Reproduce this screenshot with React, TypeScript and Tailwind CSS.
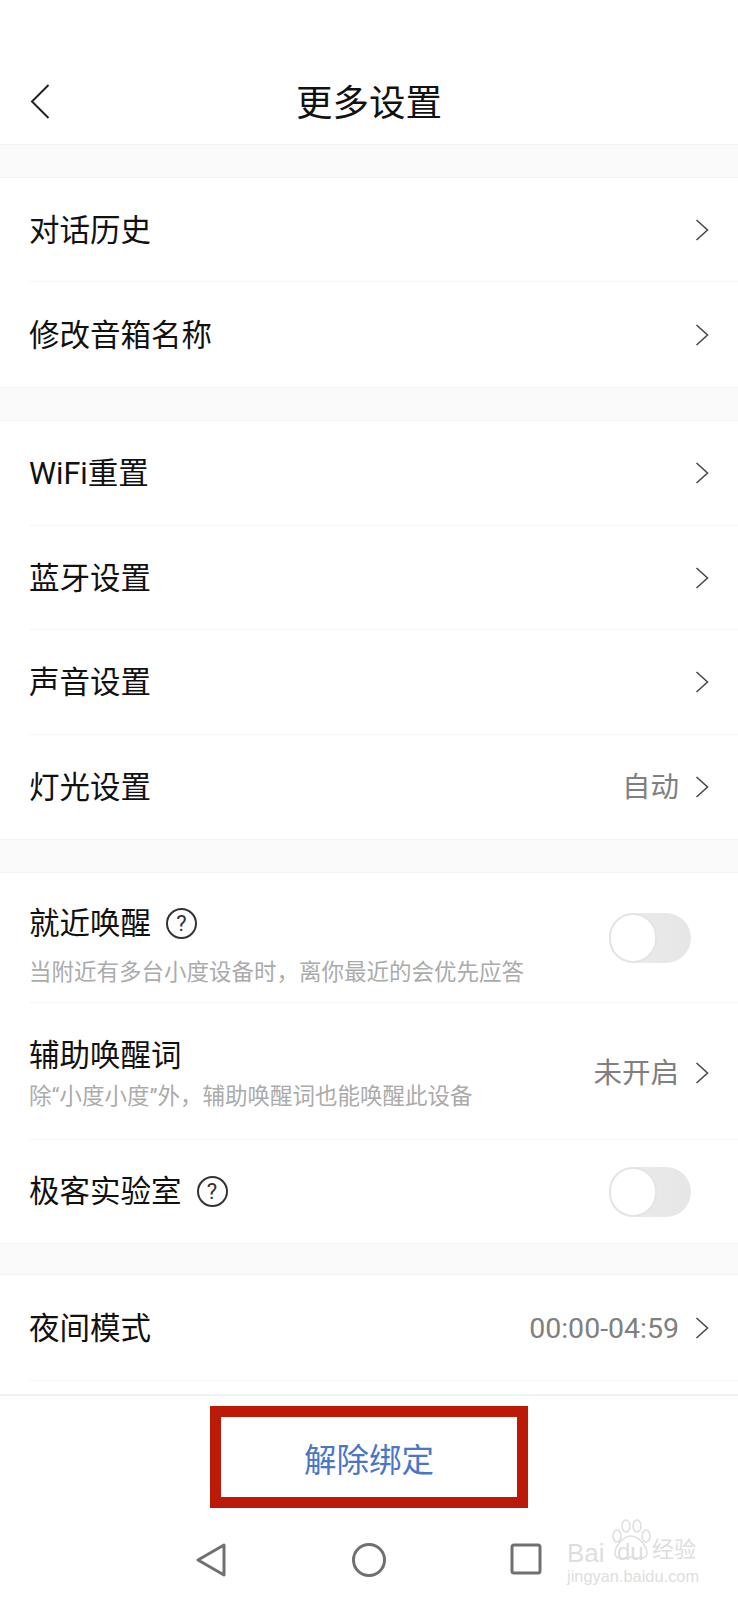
import React from "react";

function Chevron() {
  return (
    <svg width="14" height="22" viewBox="0 0 14 22" fill="none" className="shrink-0">
      <path d="M1.5 1 L12.5 11 L1.5 21" stroke="#4a4a4a" strokeWidth="1.6" />
    </svg>
  );
}

function Help() {
  return (
    <span className="w-[31px] h-[31px] rounded-full border-2 border-[#333] flex items-center justify-center text-[22px] leading-none text-[#333] shrink-0">
      ?
    </span>
  );
}

function Toggle() {
  return (
    <div className="w-[82px] h-[50px] rounded-full bg-gradient-to-r from-[#f2f2f2] via-[#e9e9e9] to-[#e6e6e6] relative shrink-0">
      <div className="absolute left-0 top-0 w-[48px] h-[50px] rounded-full bg-white border-2 border-[#e4e4e4]" />
    </div>
  );
}

function Gap({ h }: { h: string }) {
  return <div className={`${h} bg-[#fafafa] border-y border-[#f3f3f3]`} />;
}

function Row({
  label,
  right,
  h,
  divider = true,
}: {
  label: string;
  right?: string;
  h: string;
  divider?: boolean;
}) {
  return (
    <div className={`${h} ml-[29px] pr-[29px] flex items-center justify-between ${divider ? "border-b border-[#f6f6f6]" : ""}`}>
      <span className="text-[30.5px] leading-none text-[#111] pt-[3px]">{label}</span>
      <div className="flex items-center gap-[16px]">
        {right && <span className="text-[28.5px] leading-none text-[#808080] pt-[3px]">{right}</span>}
        <Chevron />
      </div>
    </div>
  );
}

export default function App() {
  return (
    <div className="w-[738px] h-[1600px] overflow-hidden bg-white relative font-['Roboto','Noto_Sans_CJK_SC',sans-serif]">
      <header className="h-[144px] pt-[60px] relative flex items-center justify-center">
        <svg width="20" height="35" viewBox="0 0 20 35" fill="none" className="absolute left-[30px] top-[84px]">
          <path d="M18.5 1 L2 17.5 L18.5 34" stroke="#222" strokeWidth="2" />
        </svg>
        <h1 className="text-[36.5px] leading-none text-[#111] font-normal pt-[4px]">更多设置</h1>
      </header>
      <Gap h="h-[34px]" />
      <section>
        <Row label="对话历史" h="h-[104px]" />
        <Row label="修改音箱名称" h="h-[105px]" divider={false} />
      </section>
      <Gap h="h-[34px]" />
      <section>
        <Row label="WiFi重置" h="h-[105px]" />
        <Row label="蓝牙设置" h="h-[104px]" />
        <Row label="声音设置" h="h-[105px]" />
        <Row label="灯光设置" right="自动" h="h-[104px]" divider={false} />
      </section>
      <Gap h="h-[34px]" />
      <section>
        <div className="h-[130px] ml-[29px] pr-[47px] flex items-center justify-between border-b border-[#f6f6f6]">
          <div className="flex flex-col pt-[12px]">
            <div className="flex items-center gap-[15px] h-[40px]">
              <span className="text-[30.5px] leading-none text-[#111]">就近唤醒</span>
              <Help />
            </div>
            <span className="text-[22.5px] leading-none text-[#ababab] mt-[17px] whitespace-nowrap">当附近有多台小度设备时，离你最近的会优先应答</span>
          </div>
          <Toggle />
        </div>
        <div className="h-[137px] ml-[29px] pr-[29px] flex items-center justify-between border-b border-[#f6f6f6]">
          <div className="flex flex-col pt-[6px]">
            <span className="text-[30.5px] leading-none text-[#111]">辅助唤醒词</span>
            <span className="text-[22.5px] leading-none text-[#ababab] mt-[13px] whitespace-nowrap">除“小度小度”外，辅助唤醒词也能唤醒此设备</span>
          </div>
          <div className="flex items-center gap-[16px] pt-[4px]">
            <span className="text-[28.5px] leading-none text-[#808080] pt-[2px]">未开启</span>
            <Chevron />
          </div>
        </div>
        <div className="h-[103px] ml-[29px] pr-[47px] flex items-center justify-between">
          <div className="flex items-center gap-[15px]">
            <span className="text-[30.5px] leading-none text-[#111] pt-[2px]">极客实验室</span>
            <Help />
          </div>
          <Toggle />
        </div>
      </section>
      <Gap h="h-[32px]" />
      <section className="h-[121px] border-b-2 border-[#f1f1f1]">
        <Row label="夜间模式" right="00:00-04:59" h="h-[106px]" />
      </section>
      <div className="mt-[10px] mx-auto w-[318px] h-[102px] border-[11px] border-[#bb1a08] flex items-center justify-center">
        <span className="text-[32.5px] leading-none text-[#4a76c8] pt-[8px]">解除绑定</span>
      </div>
      <nav className="mt-[35px] h-[32px] relative flex items-center">
        <svg width="32" height="34" viewBox="0 0 32 34" fill="none" className="absolute left-[195px] top-0">
          <path d="M29 2 L3 17 L29 32 Z" stroke="#707070" strokeWidth="3" strokeLinejoin="round" />
        </svg>
        <svg width="34" height="34" viewBox="0 0 34 34" fill="none" className="absolute left-[352px] top-0">
          <circle cx="17" cy="17" r="15.5" stroke="#707070" strokeWidth="3" />
        </svg>
        <svg width="32" height="32" viewBox="0 0 32 32" fill="none" className="absolute left-[510px] top-0">
          <rect x="2" y="2" width="28" height="28" rx="2" stroke="#707070" strokeWidth="3" />
        </svg>
      </nav>
      <div className="absolute left-[566px] top-[1519px] w-[132px] h-[66px] text-[#dedede]">
        <svg width="44" height="42" viewBox="0 0 44 42" fill="none" className="absolute left-[43px] top-0" stroke="#dedede" strokeWidth="1.5">
          <ellipse cx="8" cy="17" rx="4" ry="6" />
          <ellipse cx="17" cy="7" rx="4" ry="6" />
          <ellipse cx="28" cy="7" rx="4" ry="6" />
          <ellipse cx="37" cy="17" rx="4" ry="6" />
          <path d="M22 17 C14 17 6 28 6 34 C6 42 17 39 22 38 C27 39 38 42 38 34 C38 28 30 17 22 17 Z" />
        </svg>
        <span className="absolute left-[1px] top-[21px] text-[26px] leading-none font-['Liberation_Sans',sans-serif]">Bai</span>
        <span className="absolute left-[51px] top-[21px] text-[24px] leading-none font-['Liberation_Sans',sans-serif]">du</span>
        <span className="absolute left-[86px] top-[20px] text-[22px] leading-none whitespace-nowrap">经验</span>
        <span className="absolute left-[1px] top-[49px] text-[16.4px] leading-none whitespace-nowrap font-['Liberation_Sans',sans-serif]">jingyan.baidu.com</span>
      </div>
    </div>
  );
}
